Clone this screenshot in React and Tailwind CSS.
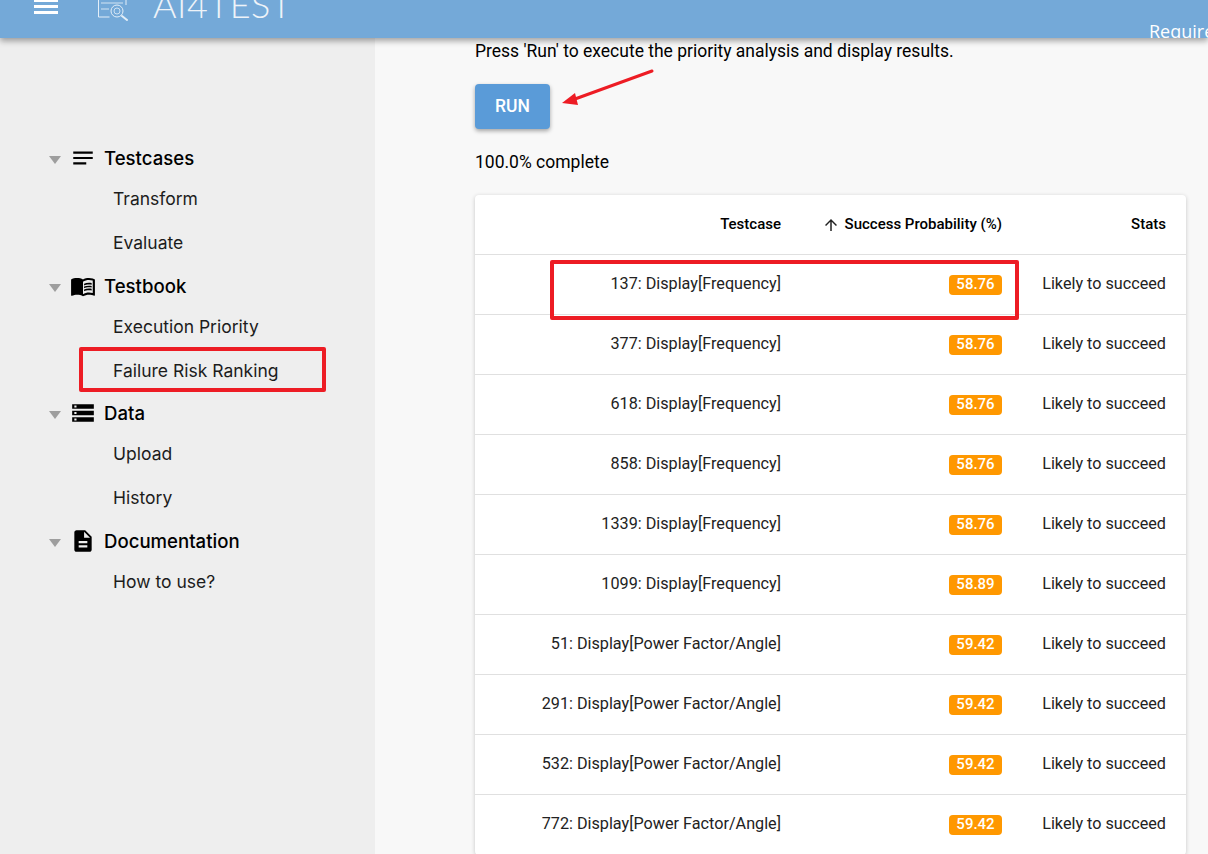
import React from 'react';

const NAV_GROUPS = [
  { label: 'Testcases', icon: 'notes', items: ['Transform', 'Evaluate'], gap: 'mb-[4px]' },
  { label: 'Testbook', icon: 'book', items: ['Execution Priority', 'Failure Risk Ranking'], gap: 'mb-[3px]' },
  { label: 'Data', icon: 'storage', items: ['Upload', 'History'], gap: 'mb-[4px]' },
  { label: 'Documentation', icon: 'doc', items: ['How to use?'], gap: 'mb-[4px]' },
];

const ROWS = [
  ['137: Display[Frequency]', '58.76'],
  ['377: Display[Frequency]', '58.76'],
  ['618: Display[Frequency]', '58.76'],
  ['858: Display[Frequency]', '58.76'],
  ['1339: Display[Frequency]', '58.76'],
  ['1099: Display[Frequency]', '58.89'],
  ['51: Display[Power Factor/Angle]', '59.42'],
  ['291: Display[Power Factor/Angle]', '59.42'],
  ['532: Display[Power Factor/Angle]', '59.42'],
  ['772: Display[Power Factor/Angle]', '59.42'],
];

const NavIcon = ({ name }) => {
  if (name === 'notes') {
    return (
      <svg viewBox="0 0 24 24" className="w-[26px] h-[26px] fill-black">
        <path d="M3 18h12v-2H3v2zM3 6v2h18V6H3zm0 7h18v-2H3v2z" />
      </svg>
    );
  }
  if (name === 'book') {
    return (
      <svg viewBox="0 0 24 24" className="w-[26px] h-[26px] fill-black">
        <path d="M21 5c-1.11-.35-2.33-.5-3.5-.5-1.95 0-4.05.4-5.5 1.5-1.45-1.1-3.55-1.5-5.5-1.5S2.45 4.9 1 6v14.65c0 .25.25.5.5.5.1 0 .15-.05.25-.05C3.1 20.45 5.05 20 6.5 20c1.95 0 4.05.4 5.5 1.5 1.35-.85 3.8-1.5 5.5-1.5 1.65 0 3.35.3 4.75 1.05.1.05.15.05.25.05.25 0 .5-.25.5-.5V6c-.6-.45-1.25-.75-2-1zm0 13.5c-1.1-.35-2.3-.5-3.5-.5-1.7 0-4.15.65-5.5 1.5V8c1.35-.85 3.8-1.5 5.5-1.5 1.2 0 2.4.15 3.5.5v11.5z" />
        <path d="M17.5 10.5c.88 0 1.73.09 2.5.26V9.24c-.79-.15-1.64-.24-2.5-.24-1.7 0-3.24.29-4.5.83v1.66c1.13-.64 2.7-.99 4.5-.99zM13 12.49v1.66c1.13-.64 2.7-.99 4.5-.99.88 0 1.73.09 2.5.26V11.9c-.79-.15-1.64-.24-2.5-.24-1.7 0-3.24.3-4.5.83zM17.5 14.33c-1.7 0-3.24.29-4.5.83v1.66c1.13-.64 2.7-.99 4.5-.99.88 0 1.73.09 2.5.26v-1.52c-.79-.16-1.64-.24-2.5-.24z" />
      </svg>
    );
  }
  if (name === 'storage') {
    return (
      <svg viewBox="0 0 24 24" className="w-[26px] h-[26px] fill-black">
        <path d="M2 20h20v-4H2v4zm2-3h2v2H4v-2zM2 4v4h20V4H2zm4 3H4V5h2v2zm-4 7h20v-4H2v4zm2-3h2v2H4v-2z" />
      </svg>
    );
  }
  return (
    <svg viewBox="0 0 24 24" className="w-[26px] h-[26px] fill-black">
      <path d="M14 2H6c-1.1 0-1.99.9-1.99 2L4 20c0 1.1.89 2 1.99 2H18c1.1 0 2-.9 2-2V8l-6-6zm2 16H8v-2h8v2zm0-4H8v-2h8v2zm-3-5V3.5L18.5 9H13z" />
    </svg>
  );
};

const LogoIcon = () => (
  <svg viewBox="0 0 32 21" className="w-[32px] h-[21px] fill-none stroke-[#e3eef8]" strokeWidth="1">
    <path d="M1.5 0v17h11" />
    <path d="M29 0v5" />
    <path d="M4 3h22M4 9h8" opacity="0.85" />
    <circle cx="20" cy="11" r="6" />
    <circle cx="20" cy="11" r="3" opacity="0.8" />
    <path d="M25 16l5 4" strokeWidth="2" strokeLinecap="round" />
  </svg>
);

const App = () => {
  return (
    <div className="relative w-[1208px] h-[854px] overflow-hidden flex flex-col bg-[#f8f8f8] font-['Roboto',sans-serif] text-black">

      {/* top bar */}
      <header className="relative z-10 h-[38px] shrink-0 overflow-hidden flex items-start bg-[#74a9d8] shadow-[0_3px_6px_rgba(0,0,0,0.35)] text-white">
        <div className="ml-[34px] -mt-[1px] w-[24px] flex flex-col gap-[3.5px]">
          <div className="h-[2.5px] bg-white" />
          <div className="h-[2.5px] bg-white" />
          <div className="h-[2.5px] bg-white" />
        </div>
        <div className="ml-[39px]">
          <LogoIcon />
        </div>
        <div className="ml-[24px] -mt-[20px] font-['Lato',sans-serif] font-light text-[36px] leading-[48px] tracking-[0.5px] text-[#eef3f8]">AI4TEST</div>
        <div className="ml-auto -mr-[60px] w-[119px] pt-[19px] font-['Open_Sans',sans-serif] font-medium text-[18px] leading-[24px] whitespace-nowrap">Requirements</div>
      </header>

      <div className="flex flex-1 min-h-0">

        {/* sidebar */}
        <aside className="w-[375px] shrink-0 bg-[#eeeeee] pt-[102px] font-['Inter',sans-serif]">
          {NAV_GROUPS.map((group) => (
            <div key={group.label} className={group.gap}>
              <div className="h-[36px] flex items-center pl-[49px]">
                <svg viewBox="0 0 12 8" className="w-[12px] h-[8px] fill-[#9e9e9e] mt-[3px]">
                  <polygon points="0,0 12,0 6,8" />
                </svg>
                <span className="ml-[9px] w-[26px] flex justify-center">
                  <NavIcon name={group.icon} />
                </span>
                <span className="ml-[8px] mt-[1px] text-[18.6px] font-medium">{group.label}</span>
              </div>
              {group.items.map((item) => (
                <div key={item} className="h-[44px] pt-[2px] flex items-center pl-[113px] text-[17.5px] text-[#1c1c1c]">{item}</div>
              ))}
            </div>
          ))}
        </aside>

        {/* main content */}
        <main className="flex-1 min-w-0 pl-[100px] pr-[22px]">
          <p className="pt-[1px] text-[17.5px] leading-[24px]">Press 'Run' to execute the priority analysis and display results.</p>
          <button className="mt-[21px] block w-[75px] h-[45px] rounded-[4px] bg-[#5a9bd8] text-white text-[17.5px] font-medium shadow-[0_2px_4px_rgba(0,0,0,0.35)]">RUN</button>
          <p className="mt-[21px] text-[17.5px] leading-[24px]">100.0% complete</p>

          <div className="mt-[21px] bg-white rounded-[4px] shadow-[0_1px_4px_rgba(0,0,0,0.2)] text-[16.2px]">
            <div className="grid grid-cols-[326px_221px_164px] h-[60px] items-center text-[15px] font-medium border-b border-[#e0e0e0]">
              <div className="pr-5 text-right">Testcase</div>
              <div className="pr-5 flex justify-end items-center gap-[5px]">
                <svg viewBox="0 0 24 24" className="w-[18px] h-[18px] fill-[#222]">
                  <path d="M4 12l1.41 1.41L11 7.83V20h2V7.83l5.58 5.59L20 12l-8-8-8 8z" />
                </svg>
                <span>Success Probability (%)</span>
              </div>
              <div className="pr-5 text-right">Stats</div>
            </div>
            {ROWS.map(([name, score], i) => (
              <div key={i} className="grid grid-cols-[326px_221px_164px] h-[60px] items-center border-b border-[#e0e0e0] text-[#222]">
                <div className="pr-5 text-right">{name}</div>
                <div className="pr-5 flex justify-end">
                  <span className="w-[53px] h-[20px] flex items-center justify-center rounded-[4px] bg-[#ff9800] text-white text-[15px] font-medium">{score}</span>
                </div>
                <div className="pr-5 text-right">Likely to succeed</div>
              </div>
            ))}
          </div>
        </main>
      </div>

      {/* red annotations drawn over the screenshot */}
      <div className="absolute left-[79px] top-[347px] w-[247px] h-[45px] border-[4px] border-[#ed1c24] rounded-[2px]" />
      <div className="absolute left-[550px] top-[260px] w-[469px] h-[60px] border-[4px] border-[#ed1c24] rounded-[2px]" />
      <svg className="absolute left-[555px] top-[65px] w-[105px] h-[45px]" viewBox="0 0 105 45">
        <path d="M97 6L20 34" stroke="#ed1c24" strokeWidth="3" strokeLinecap="round" />
        <polygon points="7,38 20,28 23,40" fill="#ed1c24" />
      </svg>
    </div>
  );
};

export default App;
